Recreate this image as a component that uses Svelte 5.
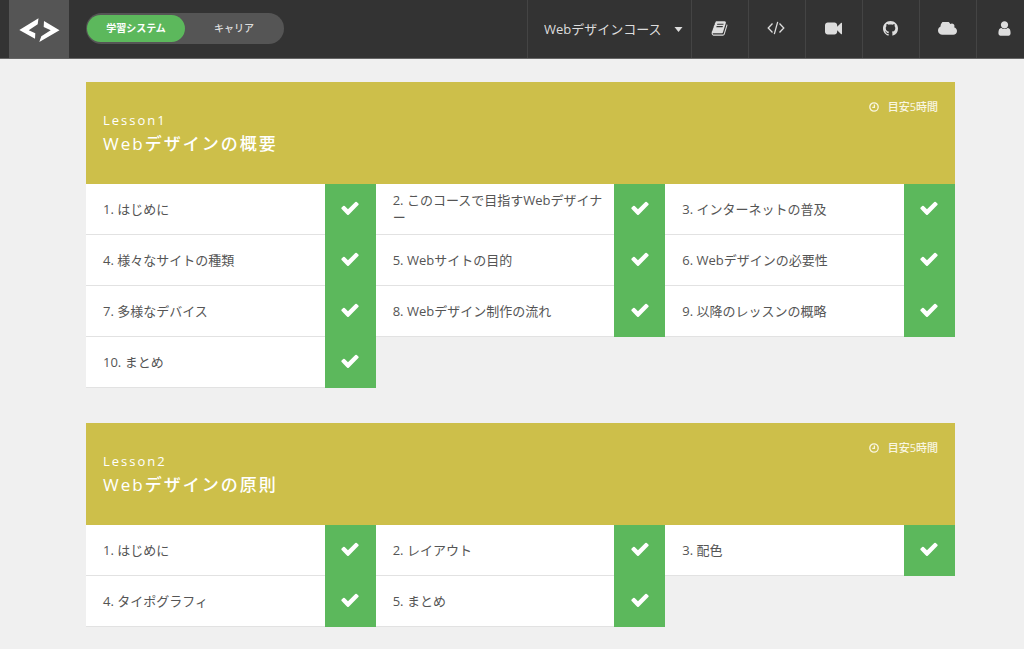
<script lang="ts">
  type Lesson = { id: number; title: string; hours: number; items: string[] };

  const lessons: Lesson[] = [
    {
      id: 1,
      title: 'Webデザインの概要',
      hours: 5,
      items: [
        'はじめに',
        'このコースで目指すWebデザイナー',
        'インターネットの普及',
        '様々なサイトの種類',
        'Webサイトの目的',
        'Webデザインの必要性',
        '多様なデバイス',
        'Webデザイン制作の流れ',
        '以降のレッスンの概略',
        'まとめ'
      ]
    },
    {
      id: 2,
      title: 'Webデザインの原則',
      hours: 5,
      items: ['はじめに', 'レイアウト', '配色', 'タイポグラフィ', 'まとめ']
    }
  ];

  let mode = $state('learning');
  let course = $state('web-design');
</script>

<header>
  <a class="logo" href="#top" aria-label="Home">
    <svg viewBox="0 0 41 24" width="41" height="24">
      <path d="M.3 12 19.500 .3 18.700 6.300 9.700 12.300 16.300 15.300 16 20.700Z" />
      <path d="M25 3 40.500 12.300 20.300 24 22.300 18.300 31.700 12.300 24.700 9Z" />
    </svg>
  </a>

  <div class="switch">
    <button type="button" class:active={mode === 'learning'} onclick={() => (mode = 'learning')}>
      学習システム
    </button>
    <button type="button" class:active={mode === 'career'} onclick={() => (mode = 'career')}>
      キャリア
    </button>
  </div>

  <nav>
    <div class="course">
      <select bind:value={course} aria-label="コース">
        <option value="web-design">Webデザインコース</option>
      </select>
      <svg class="caret" viewBox="0 0 8 5" width="9" height="5"><path d="M0 0h8L4 5z" /></svg>
    </div>
    <a href="#lessons" aria-label="Lessons">
      <svg viewBox="0 0 1792 1792" width="17" height="17"><path d="M1703 478q40 57 18 129l-275 906q-19 64-76.500 107.500t-122.500 43.500h-923q-77 0-148.500-53.500t-99.500-131.500q-24-67-2-127 0-4 3-27t4-37q1-8-3-21.500t-3-19.500q2-11 8-21t16.500-23.500 16.500-23.500q23-38 45-91.500t30-91.500q3-10 .5-30t-.5-28q3-11 17-28t17-23q21-36 42-92t25-90q1-9-2.500-32t.5-28q4-13 22-30.500t22-22.500q19-26 42.500-84.500t27.500-96.500q1-8-3-25.500t-2-26.500q2-8 9-18t18-23 17-21q8-12 16.500-30.500t15-35 16-36 19.500-32 26.500-23.500 36-11.500 47.500 5.500l-1 3q38-9 51-9h761q74 0 114 56t18 130l-274 906q-36 119-71.500 153.500t-128.500 34.500h-869q-27 0-38 15-11 16-1 43 24 70 144 70h923q29 0 56-15.500t35-41.500l300-987q7-22 5-57 38 15 59 43zm-1064 2q-4 13 2 22.500t20 9.500h608q13 0 25.500-9.500t16.500-22.500l21-64q4-13-2-22.500t-20-9.500h-608q-13 0-25.500 9.500t-16.500 22.500zm-83 256q-4 13 2 22.500t20 9.500h608q13 0 25.500-9.500t16.500-22.500l21-64q4-13-2-22.500t-20-9.500h-608q-13 0-25.500 9.500t-16.500 22.500z" /></svg>
    </a>
    <a href="#code" aria-label="Code">
      <svg class="line" viewBox="0 0 18 14" width="18" height="14"><path d="M5.500 2.500 1.200 7l4.300 4.500M12.500 2.500 16.800 7l-4.300 4.500M10.700 .8 7.300 13.200" /></svg>
    </a>
    <a href="#movies" aria-label="Movies">
      <svg viewBox="0 0 1792 1792" width="17" height="17"><path d="M1792 352v1088q0 42-39 59-13 5-25 5-27 0-45-19l-403-403v166q0 119-84.500 203.500t-203.500 84.500h-704q-119 0-203.500-84.500t-84.500-203.500v-704q0-119 84.500-203.500t203.500-84.500h704q119 0 203.500 84.500t84.500 203.500v165l403-402q18-19 45-19 12 0 25 5 39 17 39 59z" /></svg>
    </a>
    <a href="#github" aria-label="GitHub">
      <svg viewBox="0 0 16 16" width="15" height="15"><path d="M8 0C3.58 0 0 3.58 0 8c0 3.54 2.29 6.53 5.47 7.59.4.07.55-.17.55-.38 0-.19-.01-.82-.01-1.49-2.01.37-2.53-.49-2.69-.94-.09-.23-.48-.94-.82-1.13-.28-.15-.68-.52-.01-.53.63-.01 1.08.58 1.23.82.72 1.21 1.87.87 2.33.66.07-.52.28-.87.51-1.07-1.78-.2-3.64-.89-3.64-3.95 0-.87.31-1.59.82-2.15-.08-.2-.36-1.02.08-2.12 0 0 .67-.21 2.2.82.64-.18 1.32-.27 2-.27s1.36.09 2 .27c1.53-1.04 2.2-.82 2.2-.82.44 1.1.16 1.92.08 2.12.51.56.82 1.27.82 2.15 0 3.07-1.87 3.75-3.65 3.95.29.25.54.73.54 1.48 0 1.07-.01 1.93-.01 2.2 0 .21.15.46.55.38A8.01 8.01 0 0 0 16 8c0-4.42-3.58-8-8-8z" /></svg>
    </a>
    <a href="#cloud" aria-label="Cloud">
      <svg viewBox="-64 256 1920 1280" width="19" height="13"><path d="M1856 1152q0 159-112.500 271.500t-271.500 112.500h-1088q-185 0-316.500-131.500t-131.500-316.500q0-132 71-241.500t187-163.500q-2-28-2-43 0-212 150-362t362-150q158 0 286.500 88t187.500 230q70-62 166-62 106 0 181 75t75 181q0 75-41 138 129 30 213 134.500t84 239.500z" /></svg>
    </a>
    <a href="#account" aria-label="Account">
      <svg viewBox="0 0 1792 1792" width="17" height="17"><path d="M1536 1399q0 109-62.500 187t-150.500 78h-854q-88 0-150.500-78t-62.500-187q0-85 8.500-160.500t31.500-152 58.500-131 94-89 134.500-34.500q131 128 313 128t313-128q76 0 134.500 34.500t94 89 58.500 131 31.500 152 8.500 160.500zm-256-887q0 159-112.500 271.500t-271.500 112.500-271.500-112.500-112.500-271.500 112.500-271.500 271.500-112.500 271.500 112.500 112.500 271.500z" /></svg>
    </a>
  </nav>
</header>

<main>
  {#each lessons as lesson (lesson.id)}
    <section>
      <div class="lesson-head">
        <h2>
          <small>Lesson{lesson.id}</small>
          {lesson.title}
        </h2>
        <p class="time">
          <svg viewBox="0 0 10 10" width="10" height="10"><circle cx="5" cy="5" r="4.200" /><path d="M5.400 2.600v2.800H3.300" /></svg>
          目安{lesson.hours}時間
        </p>
      </div>
      <ol>
        {#each lesson.items as item, i}
          <li>
            <a href="#lesson{lesson.id}-{i + 1}">
              <span class="name">{i + 1}. {item}</span>
              <span class="done">
                <svg viewBox="0 0 1792 1792" width="20" height="20"><path d="M1671 566q0 40-28 68l-724 724-136 136q-28 28-68 28t-68-28l-136-136-362-362q-28-28-28-68t28-68l136-136q28-28 68-28t68 28l294 295 656-657q28-28 68-28t68 28l136 136q28 28 28 68z" /></svg>
              </span>
            </a>
          </li>
        {/each}
      </ol>
    </section>
  {/each}
</main>

<style>
  :global(body) {
    background: #f0f0f0;
    color: #555;
    font-family: "Open Sans", "Noto Sans CJK JP", sans-serif;
    font-size: 13px;
    line-height: 17px;
  }

  svg {
    display: block;
    flex: none;
    fill: currentColor;
  }

  a {
    color: inherit;
    text-decoration: none;
  }

  header {
    display: flex;
    height: 58px;
    padding-left: 9px;
    overflow: hidden;
    background: #333;
    border-bottom: 1px solid #666;
    color: #ddd;
  }

  .logo {
    display: flex;
    align-items: center;
    justify-content: center;
    box-sizing: border-box;
    width: 60px;
    padding-top: 2px;
    background: #555;
    color: #fff;
  }

  .switch {
    display: flex;
    align-self: center;
    box-sizing: border-box;
    width: 198px;
    height: 31px;
    margin-left: 17px;
    margin-bottom: 2px;
    padding: 2px 1px;
    border-radius: 16px;
    background: #555;
  }

  .switch button {
    flex: 1;
    padding: 0;
    border: 0;
    border-radius: 14px;
    background: none;
    color: #ddd;
    font: 500 10px/17px "Open Sans", "Noto Sans CJK JP", sans-serif;
    cursor: pointer;
  }

  .switch .active {
    background: #5cb85c;
    color: #fff;
    font-weight: 700;
  }

  nav {
    display: flex;
    margin-left: auto;
    margin-right: -9px;
  }

  nav a,
  .course {
    display: flex;
    align-items: center;
    justify-content: center;
    box-sizing: border-box;
    width: 57px;
    padding: 0 2px 2px 0;
    border-left: 1px solid #444;
  }

  .course {
    position: relative;
    width: 164px;
    padding: 0;
  }

  select {
    appearance: none;
    width: 100%;
    height: 100%;
    padding: 0 16px;
    border: 0;
    background: none;
    color: inherit;
    font: inherit;
    cursor: pointer;
  }

  .caret {
    position: absolute;
    right: 8px;
    pointer-events: none;
  }

  .line {
    fill: none;
    stroke: currentColor;
    stroke-width: 1.3;
  }

  main {
    display: flex;
    flex-direction: column;
    gap: 35px;
    padding: 23px 69px 20px 86px;
  }

  .lesson-head {
    display: flex;
    justify-content: space-between;
    align-items: flex-start;
    padding: 16px 17px 23px;
    background: #cdbf4a;
    color: #fff;
  }

  h2 {
    margin: 11px 0 6px;
    font-size: 17px;
    font-weight: 500;
    line-height: 23px;
    letter-spacing: 2px;
  }

  h2 small {
    display: block;
    font-size: 13px;
  }

  .time {
    display: flex;
    align-items: center;
    gap: 9px;
    margin: 0;
    color: #f9f6e2;
    font-size: 11px;
    font-weight: 500;
  }

  .time svg {
    fill: none;
    stroke: currentColor;
    stroke-width: 1.3;
  }

  ol {
    display: grid;
    grid-template-columns: repeat(3, 1fr);
    margin: 0;
    padding: 0;
    list-style: none;
  }

  li a {
    display: flex;
    height: 51px;
    background: #fff;
  }

  .name {
    display: flex;
    flex: 1;
    align-items: center;
    padding: 0 10px 0 17px;
    border-bottom: 1px solid #e2e2e2;
  }

  .done {
    display: flex;
    align-items: center;
    justify-content: center;
    box-sizing: border-box;
    width: 51px;
    padding-bottom: 3px;
    background: #5cb85c;
    color: #fff;
  }
</style>
